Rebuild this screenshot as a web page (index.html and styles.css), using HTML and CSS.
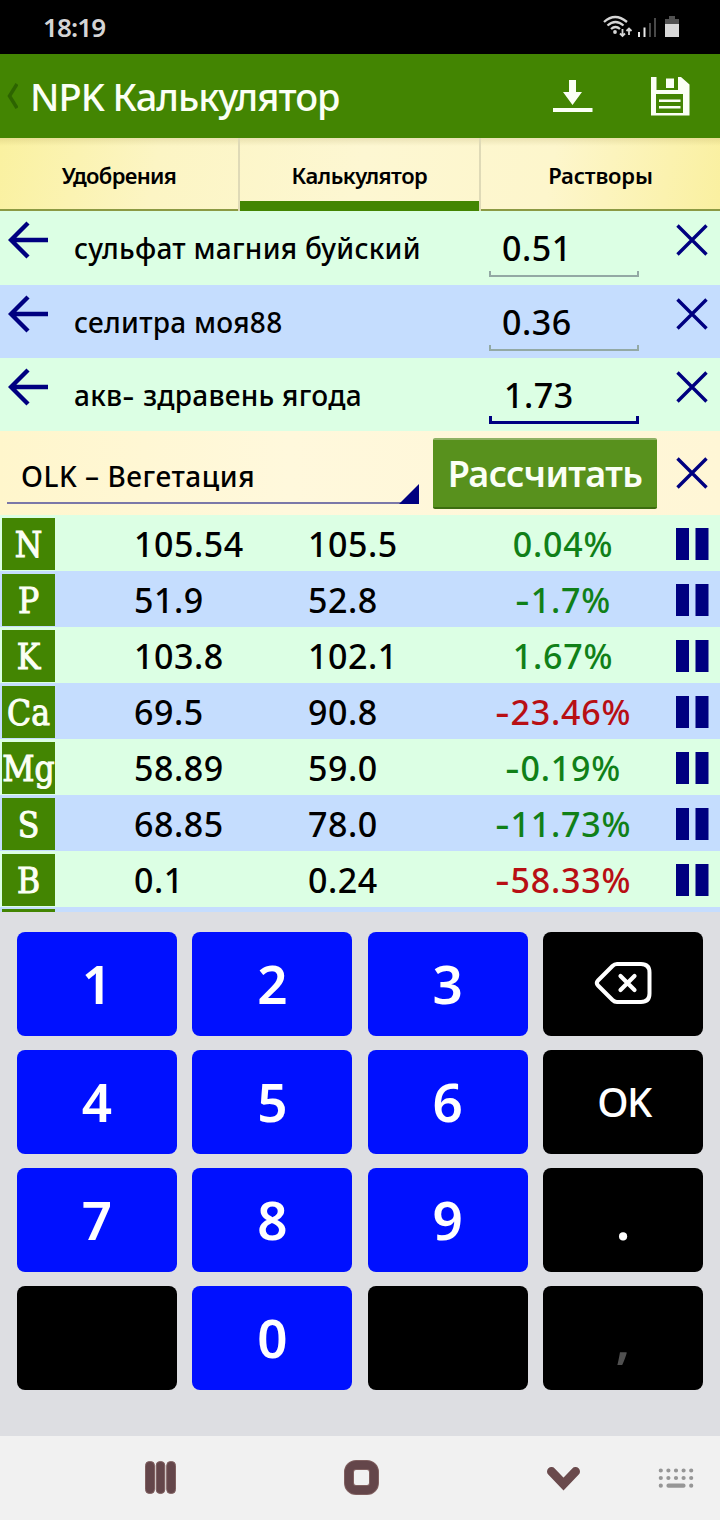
FILE: index.html
```html
<!DOCTYPE html>
<html lang="ru">
<head>
<meta charset="utf-8">
<title>NPK Калькулятор</title>
<link rel="stylesheet" href="styles.css">
</head>
<body>
<svg width="0" height="0" class="defs">
  <symbol id="arrow" viewBox="0 0 40 38"><path d="M20 2 3 19 20 36M3 19H40" fill="none" stroke="#000080" stroke-width="4.400"/></symbol>
  <symbol id="cross" viewBox="0 0 32 32"><path d="M1.500 1.500 30.500 30.500M30.500 1.500 1.500 30.500" fill="none" stroke="#000080" stroke-width="3.400"/></symbol>
  <symbol id="pause" viewBox="0 0 33 32"><path d="M0 0H13V32H0ZM19.500 0H32.500V32H19.500Z" fill="#000080"/></symbol>
</svg>
<div class="screen">
  <div class="status">
    <span class="clock">18:19</span>
    <svg class="status-icons" viewBox="0 0 78 26" width="78" height="26">
      <g fill="none" stroke="#d6d6d6" stroke-width="2.300">
        <path d="M1 8Q12 -2 24 8"/><path d="M4.500 11.500Q12.500 4.500 20.500 11.500"/><path d="M8 15Q12.500 11 17 15"/>
        <path d="M19.500 15V22M17 19.500 19.500 22 22 19.500" stroke-width="1.800"/><path d="M26 21V14.500M23.500 17 26 14.500 28.500 17" stroke-width="1.800"/>
      </g>
      <circle cx="12" cy="18" r="1.900" fill="#d6d6d6"/>
      <path d="M35 18h2v5h-2zM40.500 13.500h2v9.500h-2z" fill="#e8e8e8"/><path d="M46 9h2v14h-2zM51 4h2v19h-2z" fill="#484848"/>
      <path d="M66 2h6v3h4v6H62V5h4z" fill="#515151"/><path d="M62 10h14v13H62z" fill="#d8d8d8"/>
    </svg>
  </div>
  <div class="appbar">
    <svg class="back" width="12" height="26" viewBox="0 0 12 26"><path d="M11 1 3.500 13 11 25" fill="none" stroke="#2d6400" stroke-width="3.500"/></svg>
    <h1 class="title">NPK Калькулятор</h1>
    <svg class="download" width="40" height="34" viewBox="0 0 40 34"><path d="M16 1H23V13H29L19.500 26 10 13H16ZM0 29H39.500V33H0Z" fill="#fbfff5"/></svg>
    <svg class="save" width="40" height="40" viewBox="0 0 40 40"><path fill="#fbfff5" fill-rule="evenodd" d="M1 1H6.500V14H28V1H31L39.500 8.500V39.500H1ZM6 18V37H33V18Z"/><path fill="#fbfff5" d="M16 2.500H24V12H16ZM9 23.500H30.500V26H9ZM9 30H30.500V32.500H9Z"/></svg>
  </div>
  <div class="tabs">
    <div class="tab">Удобрения</div>
    <div class="tab active">Калькулятор</div>
    <div class="tab last">Растворы</div>
  </div>
  <div class="feeds">
    <div class="feed"><svg class="arrow"><use href="#arrow"/></svg><span class="name">сульфат магния буйский</span><span class="field">0.51</span><svg class="cross"><use href="#cross"/></svg></div>
    <div class="feed alt"><svg class="arrow"><use href="#arrow"/></svg><span class="name">селитра моя88</span><span class="field">0.36</span><svg class="cross"><use href="#cross"/></svg></div>
    <div class="feed"><svg class="arrow"><use href="#arrow"/></svg><span class="name">акв<span class="hyphen">-</span> здравень ягода</span><span class="field focus">1.73</span><svg class="cross"><use href="#cross"/></svg></div>
  </div>
  <div class="profile">
    <div class="select"><span class="select-text">OLK – Вегетация</span><svg class="corner" width="20" height="20"><path d="M20 0V20H0Z" fill="#000080"/></svg></div>
    <div class="calc">Рассчитать</div>
    <svg class="cross"><use href="#cross"/></svg>
  </div>
  <div class="elements">
    <div class="row"><span class="el">N</span><span class="val">105.54</span><span class="val">105.5</span><span class="pct">0.04%</span><svg class="pause"><use href="#pause"/></svg></div>
    <div class="row alt"><span class="el">P</span><span class="val">51.9</span><span class="val">52.8</span><span class="pct"><span class="hyphen">-</span>1.7%</span><svg class="pause"><use href="#pause"/></svg></div>
    <div class="row"><span class="el">K</span><span class="val">103.8</span><span class="val">102.1</span><span class="pct">1.67%</span><svg class="pause"><use href="#pause"/></svg></div>
    <div class="row alt"><span class="el">Ca</span><span class="val">69.5</span><span class="val">90.8</span><span class="pct bad"><span class="hyphen">-</span>23.46%</span><svg class="pause"><use href="#pause"/></svg></div>
    <div class="row"><span class="el">Mg</span><span class="val">58.89</span><span class="val">59.0</span><span class="pct"><span class="hyphen">-</span>0.19%</span><svg class="pause"><use href="#pause"/></svg></div>
    <div class="row alt"><span class="el">S</span><span class="val">68.85</span><span class="val">78.0</span><span class="pct"><span class="hyphen">-</span>11.73%</span><svg class="pause"><use href="#pause"/></svg></div>
    <div class="row"><span class="el">B</span><span class="val">0.1</span><span class="val">0.24</span><span class="pct bad"><span class="hyphen">-</span>58.33%</span><svg class="pause"><use href="#pause"/></svg></div>
    <div class="row alt"><span class="el"></span></div>
  </div>
  <div class="keyboard">
    <div class="key">1</div><div class="key">2</div><div class="key">3</div>
    <div class="key dark"><svg width="60" height="46" viewBox="0 0 60 46" fill="none" stroke="#fff"><path d="M24 3H48Q56.500 3 56.500 11.500V32.500Q56.500 41 48 41H24Q21.500 41 19.500 39L5 24.500Q2.500 22 5 19.500L19.500 5Q21.500 3 24 3Z" stroke-width="4"/><path d="M27.500 15 41.500 29M41.500 15 27.500 29" stroke-width="4.200" stroke-linecap="round"/></svg></div>
    <div class="key">4</div><div class="key">5</div><div class="key">6</div><div class="key dark ok">OK</div>
    <div class="key">7</div><div class="key">8</div><div class="key">9</div><div class="key dark">.</div>
    <div class="key dark"></div><div class="key">0</div><div class="key dark"></div><div class="key dark comma">,</div>
  </div>
  <div class="nav">
    <svg width="720" height="84" viewBox="0 1436 720 84">
      <g fill="#64464a" stroke="#806060" stroke-width="1"><rect x="145.500" y="1461.500" width="9" height="32" rx="4"/><rect x="156.200" y="1461.500" width="8.600" height="32" rx="4"/><rect x="166.700" y="1461.500" width="8.800" height="32" rx="4"/></g>
      <rect x="349" y="1465" width="25" height="25" rx="7" fill="none" stroke="#806060" stroke-width="10"/><rect x="349" y="1465" width="25" height="25" rx="7" fill="none" stroke="#64464a" stroke-width="8"/>
      <path d="M551.500 1471.500 563.500 1484 575.500 1471.500" fill="none" stroke="#6a4a4c" stroke-width="9" stroke-linecap="round"/>
      <g fill="none" stroke="#969696" stroke-width="4.200" stroke-linecap="round"><path d="M660.800 1470.500H692" stroke-dasharray="0 7.600"/><path d="M660.800 1478H692" stroke-dasharray="0 7.600"/><path d="M660.800 1485.700h0M668.500 1485.700h15M691.200 1485.700h0"/></g>
    </svg>
  </div>
</div>
</body>
</html>
```
FILE: styles.css
```css
* { box-sizing: border-box; }
body { margin: 0; background: #fff; font-family: "Noto Sans", "Open Sans", sans-serif; color: #000; font-weight: 500; }
.defs { display: block; }
.screen { width: 720px; height: 1520px; overflow: hidden; display: flex; flex-direction: column; }
.status { height: 54px; flex: none; background: #000; display: flex; align-items: center; justify-content: space-between; padding: 0 39px 0 43px; }
.clock { color: #d4d4d4; font-size: 26px; line-height: 54px; font-weight: 600; letter-spacing: -0.900px; }
.appbar { height: 84px; flex: none; background: #438502; display: flex; align-items: center; padding-left: 6px; }
.back { margin-right: 12px; }
.title { margin: 0; width: 523px; font-size: 38px; line-height: 84px; font-weight: 550; letter-spacing: -1px; color: #fbfff5; white-space: nowrap; }
.download { margin-right: 57px; }
.tabs { height: 73px; flex: none; display: grid; grid-template-columns: 238px 243px 239px; grid-template-rows: 73px; background: linear-gradient(#9a8a4030, #0000 8px), linear-gradient(100deg, #faf1a0, #fcf5c4 22%, #fdf7d2 50%, #fdf6cc 76%, #faf0a0); }
.tab { text-align: center; font-size: 22px; line-height: 75px; font-weight: 600; letter-spacing: -0.650px; border-bottom: 2px solid #8b9a43; }
.active { background: linear-gradient(#438502, #438502) bottom / 239px 10px no-repeat; letter-spacing: -0.500px; border: 0; box-shadow: inset 2px 0 #dfdab7, inset -2px 0 #dfdab7; }
.last { letter-spacing: -0.150px; }
.feeds { height: 220px; flex: none; display: grid; grid-template-rows: 74px 73px 73px; }
.feed { background: #dcffe4; display: flex; align-items: flex-start; }
.alt { background: #c5ddfe; }
.arrow { width: 40px; height: 38px; margin: 10px 26px 0 8px; flex: none; }
.name { width: 415px; font-size: 28px; line-height: 74px; letter-spacing: 0.270px; white-space: nowrap; }
.hyphen { display: inline-block; transform: scaleX(1.300); margin: 0 2px; }
.field { width: 150px; height: 66px; font-size: 34px; line-height: 75px; padding-left: 13px; letter-spacing: 0.550px; background: linear-gradient(#93a9a4, #93a9a4) left bottom / 2px 6px no-repeat, linear-gradient(#93a9a4, #93a9a4) right bottom / 2px 6px no-repeat, linear-gradient(#93a9a4, #93a9a4) bottom / 100% 2px no-repeat; }
.focus { padding-left: 15px; background: linear-gradient(#000080, #000080) left bottom / 3px 8px no-repeat, linear-gradient(#000080, #000080) right bottom / 3px 8px no-repeat, linear-gradient(#000080, #000080) bottom / 100% 3px no-repeat; }
.cross { width: 32px; height: 32px; flex: none; }
.feed .cross { margin: 13px 0 0 37px; }
.profile { height: 84px; flex: none; display: flex; background: linear-gradient(90deg, #fff6cc, #fff8dc 40%, #fff6d6); padding-left: 7px; }
.select { width: 412px; height: 73px; border-bottom: 2px solid #7b78a8; padding-left: 14px; display: flex; align-items: flex-end; justify-content: space-between; }
.select-text { font-size: 28px; line-height: 52px; letter-spacing: 0.550px; white-space: nowrap; }
.corner { display: block; flex: none; margin-bottom: -2px; }
.calc { width: 224px; height: 71px; margin: 7px 0 0 14px; background: #58911d; border-top: 2px solid #8fb263; border-bottom: 2px solid #3c6d0f; border-radius: 2px; color: #fbfff5; font-size: 36px; font-weight: 600; letter-spacing: -0.650px; line-height: 68px; text-align: center; white-space: nowrap; }
.profile .cross { margin: 26px 0 0 19px; }
.elements { height: 397px; flex: none; overflow: hidden; }
.row { height: 56px; background: #dcffe4; display: grid; grid-template-columns: 53px 79px 174px 186px 138px 44px 33px; padding-left: 2px; align-items: center; }
.row.alt { background: #c5ddfe; }
.el { grid-column: 1; height: 52px; display: flex; justify-content: center; background: #438502; color: #fbfff5; font: 35px/54px "DejaVu Serif Condensed", "DejaVu Serif", serif; font-stretch: condensed; -webkit-text-stroke: 1px #fbfff5; }
.val { font-size: 34px; line-height: 58px; letter-spacing: 0.550px; }
.el + .val { grid-column: 3; }
.pct { font-size: 34px; line-height: 58px; letter-spacing: 0.800px; color: #108018; text-align: center; white-space: nowrap; }
.bad { color: #b80f14; }
.pause { grid-column: 7; width: 33px; height: 32px; }
.keyboard { height: 524px; flex: none; background: #dddee2; padding: 20px 17px 46px; display: grid; grid-template-columns: repeat(4, 160px); grid-auto-rows: 104px; justify-content: space-between; row-gap: 14px; align-content: start; }
.key { background: #0010ff; border-radius: 8px; color: #fff; font-size: 53px; font-weight: 600; display: flex; align-items: center; justify-content: center; line-height: 106px; }
.dark { background: #000; }
.ok { font-size: 40px; font-weight: 550; letter-spacing: -1.500px; padding-left: 2px; }
.comma { color: #505050; }
.nav { height: 84px; flex: none; background: #f1f1f1; }
.nav svg { display: block; }
```
